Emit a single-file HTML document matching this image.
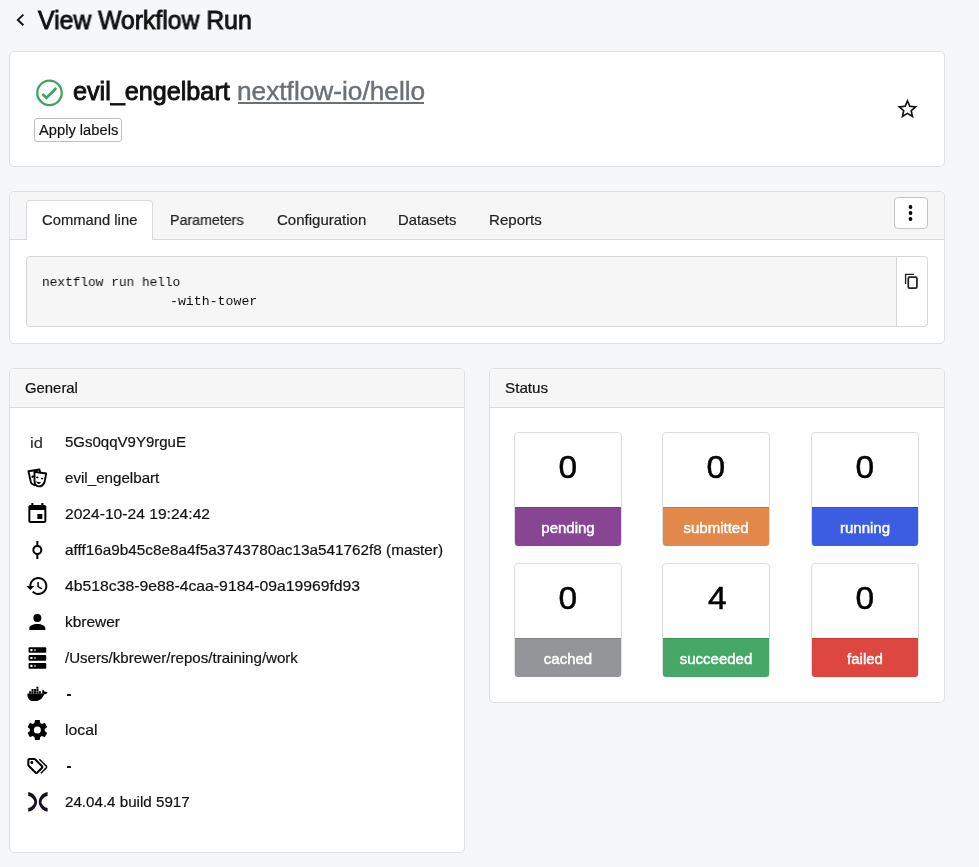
<!DOCTYPE html>
<html><head><meta charset="utf-8">
<style>
*{box-sizing:border-box;margin:0;padding:0}
html,body{width:979px;height:867px;overflow:hidden}
body{background:#f6f7f9;font-family:"Liberation Sans",sans-serif;color:#000;position:relative}
.a{position:absolute}
.t{position:absolute;white-space:nowrap;line-height:1;transform-origin:0 0;will-change:transform}
.card{position:absolute;background:#fff;border:1px solid #dfdfdf;border-radius:5px}
.hdr{position:absolute;left:0;top:0;right:0;background:#f6f6f6;border-bottom:1px solid #d9d9d9;border-radius:4px 4px 0 0}
.tab{font-size:14.5px;color:#222;-webkit-text-stroke:0.2px #222}
.row{font-size:15px;color:#111;-webkit-text-stroke:0.2px #111}
.ic{position:absolute;left:25px;transform:translateX(0.35px);width:24px;height:24px}
.sc{position:absolute;width:108px;height:114px;border:1px solid #dedede;border-radius:4px;background:#fff}
.sc .n{position:absolute;left:0;right:0;top:18px;text-align:center;font-size:32px;line-height:1;color:#000;-webkit-text-stroke:0.45px #000}
.sc .n span{display:inline-block;transform:scaleX(1.05);will-change:transform}
.sc .b{position:absolute;left:0;right:0;bottom:-1px;height:39px;border-radius:0 0 3px 3px;box-shadow:inset 0 1px 0 rgba(0,0,0,0.12);color:#fff;font-size:15px;line-height:1;text-align:center;-webkit-text-stroke:0.45px #fff}
.sc .b span{position:absolute;left:0;right:0;top:12.5px;will-change:transform}
</style></head><body>

<!-- title -->
<svg class="a" style="left:0;top:0" width="40" height="40" viewBox="0 0 40 40"><path d="M23.4 14.6 L17.9 19.9 L23.4 25.2" fill="none" stroke="#111" stroke-width="2"/></svg>
<div class="t" style="left:38px;top:8px;font-size:25px;color:#111;-webkit-text-stroke:0.9px #111;transform:scaleX(0.99)">View Workflow Run</div>

<!-- card 1 -->
<div class="card" style="left:9px;top:51px;width:936px;height:116px"></div>
<svg class="a" style="left:36px;top:79px" width="28" height="28" viewBox="0 0 28 28"><circle cx="13.5" cy="13.9" r="12.2" fill="none" stroke="#3fa35f" stroke-width="2.3"/><path d="M6.4 14.9 L10.4 18.9 L20.3 9.1" fill="none" stroke="#3fa35f" stroke-width="2.8" stroke-linecap="butt"/></svg>
<div class="t" style="left:73px;top:79px;font-size:25px;color:#111;-webkit-text-stroke:0.9px #111;transform:scaleX(1.007)">evil_engelbart</div>
<div class="t" style="left:237px;top:79px;font-size:25px;color:#6b6f76;-webkit-text-stroke:0.4px #6b6f76;transform:scaleX(1.05)">nextflow-io/hello</div>
<div class="a" style="left:238px;top:102px;width:186px;height:2px;background:#6b6f76"></div>
<div class="a" style="left:34px;top:118px;width:88px;height:24px;border:1px solid #bcbfc3;border-radius:3px;background:#fff"></div>
<div class="t" style="left:39px;top:123px;font-size:14px;color:#111;-webkit-text-stroke:0.15px #111;transform:scaleX(1.05)">Apply labels</div>
<svg class="a" style="left:895px;top:97px;transform:translate(0.25px,-0.2px)" width="24.4" height="24.4" viewBox="0 0 24 24"><path d="M22 9.24l-7.19-.62L12 2 9.19 8.63 2 9.24l5.46 4.73L5.82 21 12 17.27 18.18 21l-1.63-7.03L22 9.24zM12 15.4l-3.76 2.27 1-4.28-3.32-2.88 4.38-.38L12 6.1l1.71 4.04 4.38.38-3.32 2.88 1 4.28L12 15.4z" fill="#111"/></svg>

<!-- card 2 -->
<div class="card" style="left:9px;top:191px;width:936px;height:153px;overflow:hidden">
  <div class="hdr" style="height:48px"></div>
  <div class="a" style="left:16px;top:8px;width:127px;height:40px;background:#fff;border:1px solid #d5dbe1;border-bottom:none;border-radius:4px 4px 0 0"></div>
  <div class="a" style="left:884px;top:5px;width:34px;height:32px;background:#fff;border:1px solid #c2c4c6;border-radius:4px"></div>
  <div class="a" style="left:16px;top:64px;width:902px;height:71px;background:#f6f6f6;border:1px solid #d6d6d6;border-radius:4px">
    <div class="a" style="right:-1px;top:-1px;width:32px;height:71px;background:#fff;border:1px solid #d6d6d6;border-radius:0 4px 4px 0"></div>
  </div>
</div>
<div class="t tab" style="left:42px;top:213px;transform:scaleX(1.02)">Command line</div>
<div class="t tab" style="left:170px;top:213px;transform:scaleX(0.98)">Parameters</div>
<div class="t tab" style="left:277px;top:213px;transform:scaleX(1.035)">Configuration</div>
<div class="t tab" style="left:398px;top:213px;transform:scaleX(1.02)">Datasets</div>
<div class="t tab" style="left:489px;top:213px;transform:scaleX(1.04)">Reports</div>
<svg class="a" style="left:898px;top:201px" width="24" height="24" viewBox="0 0 24 24"><circle cx="12.5" cy="6" r="1.9" fill="#000"/><circle cx="12.5" cy="12" r="1.9" fill="#000"/><circle cx="12.5" cy="18" r="1.9" fill="#000"/></svg>
<div class="t" style="left:42px;top:273px;font-family:'Liberation Mono',monospace;font-size:13px;line-height:19px;color:#111;white-space:pre;transform:scaleX(0.985)">nextflow run hello</div>
<div class="t" style="left:169.5px;top:292px;font-family:'Liberation Mono',monospace;font-size:13px;line-height:19px;color:#111;white-space:pre;transform:scaleX(1.017)">-with-tower</div>
<svg class="a" style="left:902px;top:271px" width="20" height="20" viewBox="0 0 20 20"><path d="M3.6 13.1 V3.4 H12" fill="none" stroke="#222" stroke-width="1.4"/><rect x="6.3" y="6.2" width="8.6" height="10.8" rx="1.3" fill="none" stroke="#222" stroke-width="1.75"/></svg>

<!-- General -->
<div class="card" style="left:9px;top:368px;width:456px;height:485px">
  <div class="hdr" style="height:39px"></div>
</div>
<div class="t" style="left:25px;top:381px;font-size:14.5px;color:#111;-webkit-text-stroke:0.2px #111;transform:scaleX(1.026)">General</div>

<div class="t" style="left:29.6px;top:435px;font-size:15px;color:#333;-webkit-text-stroke:0.2px #333;transform:scaleX(1.1)">id</div>
<div class="t row" style="left:65px;top:434px;transform:scaleX(1.0)">5Gs0qqV9Y9rguE</div>

<svg class="ic" style="top:466px" viewBox="0 0 24 24"><g fill="none" stroke="#000" stroke-width="1.9" stroke-linejoin="round" stroke-linecap="round"><path d="M14.8 6.6 L14.1 3.5 L3.1 5.3 L5.6 16.6 C6.2 17.8 7.5 18.6 9.3 19.2"/><path d="M9.1 5.8 L20.8 7.5 L19.3 15.6 C18.5 18.2 16.2 20.4 13.4 20.4 C11.3 20.4 9.3 18.6 9.2 15.4 Z"/><path d="M6.9 11 L7.8 10.3"/></g><ellipse cx="11.9" cy="11.3" rx="1.2" ry="0.85" fill="#000"/><ellipse cx="16.7" cy="12.5" rx="1.2" ry="0.85" fill="#000"/><path d="M10.8 15.3 C12.4 16 14 16.3 15.6 16.3 C15.2 17.5 14.2 18 13.1 17.9 C11.9 17.7 11.1 16.8 10.8 15.3 Z" fill="#000"/></svg>
<div class="t row" style="left:65px;top:470px;transform:scaleX(1.01)">evil_engelbart</div>

<svg class="ic" style="top:502px" viewBox="0 0 24 24"><path d="M17 12h-5v5h5v-5zM16 1v2H8V1H6v2H5c-1.11 0-1.99.9-1.99 2L3 19c0 1.1.89 2 2 2h14c1.1 0 2-.9 2-2V5c0-1.1-.9-2-2-2h-1V1h-2zm3 18H5V8h14v11z" fill="#000"/></svg>
<div class="t row" style="left:65px;top:506px;transform:scaleX(1.041)">2024-10-24 19:24:42</div>

<svg class="ic" style="top:538px" viewBox="0 0 24 24"><path d="M17,12C17,14.42 15.28,16.44 13,16.9V21H11V16.9C8.72,16.44 7,14.42 7,12C7,9.58 8.72,7.56 11,7.1V3H13V7.1C15.28,7.56 17,9.58 17,12M12,9A3,3 0 0,0 9,12A3,3 0 0,0 12,15A3,3 0 0,0 15,12A3,3 0 0,0 12,9Z" fill="#000"/></svg>
<div class="t row" style="left:65px;top:542px;transform:scaleX(1.02)">afff16a9b45c8e8a4f5a3743780ac13a541762f8 (master)</div>

<svg class="ic" style="top:574px" viewBox="0 0 24 24"><path d="M13 3c-4.97 0-9 4.03-9 9H1l3.89 3.89.07.14L9 12H6c0-3.87 3.13-7 7-7s7 3.13 7 7-3.13 7-7 7c-1.93 0-3.68-.79-4.94-2.06l-1.42 1.42C8.27 19.99 10.51 21 13 21c4.97 0 9-4.03 9-9s-4.03-9-9-9zm-1 5v5l4.28 2.54.72-1.21-3.5-2.08V8H12z" fill="#000"/></svg>
<div class="t row" style="left:65px;top:578px;transform:scaleX(1.05)">4b518c38-9e88-4caa-9184-09a19969fd93</div>

<svg class="ic" style="top:610px" viewBox="0 0 24 24"><path d="M12,4A4,4 0 0,1 16,8A4,4 0 0,1 12,12A4,4 0 0,1 8,8A4,4 0 0,1 12,4M12,14C16.42,14 20,15.79 20,18V20H4V18C4,15.79 7.58,14 12,14Z" fill="#000"/></svg>
<div class="t row" style="left:65px;top:614px;transform:scaleX(1.03)">kbrewer</div>

<svg class="ic" style="top:646px" viewBox="0 0 24 24"><g fill="#000"><rect x="3.2" y="1.2" width="17.7" height="5.6" rx="1"/><rect x="3.2" y="9.1" width="17.7" height="5.7" rx="1"/><rect x="3.2" y="17" width="17.7" height="5.8" rx="1"/></g><g fill="#fff"><rect x="5" y="3" width="2.2" height="2.2" rx="0.6"/><rect x="5" y="10.9" width="2.2" height="2.2" rx="0.6"/><rect x="5" y="18.8" width="2.2" height="2.2" rx="0.6"/></g><g fill="#8a8a8a"><rect x="8.7" y="3" width="1.8" height="2.2"/><rect x="8.7" y="10.9" width="1.8" height="2.2"/><rect x="8.7" y="18.8" width="1.8" height="2.2"/></g></svg>
<div class="t row" style="left:65px;top:650px;transform:scaleX(1.005)">/Users/kbrewer/repos/training/work</div>

<svg class="ic" style="top:682px" viewBox="0 0 24 24"><path d="M21.81 10.25C21.75 10.21 21.25 9.82 20.17 9.82C19.89 9.82 19.61 9.85 19.33 9.9C19.12 8.46 17.93 7.76 17.88 7.73L17.59 7.56L17.4 7.83C17.16 8.2 17 8.6 16.88 9.03C16.68 9.84 16.8 10.6 17.21 11.26C16.72 11.54 15.93 11.6 15.77 11.61H2.62C2.28 11.61 2 11.89 2 12.23C2 13.37 2.19 14.5 2.58 15.58C3.03 16.76 3.69 17.63 4.56 18.17C5.53 18.77 7.13 19.11 8.95 19.11C9.77 19.11 10.58 19.04 11.38 18.89C12.5 18.69 13.57 18.3 14.56 17.73C15.38 17.25 16.11 16.64 16.74 15.93C17.79 14.74 18.42 13.41 18.89 12.24H19.08C20.23 12.24 20.94 11.78 21.33 11.39C21.59 11.15 21.78 10.86 21.92 10.53L22 10.28L21.81 10.25M3.85 11.24H5.61C5.69 11.24 5.77 11.17 5.77 11.08V9.5C5.77 9.42 5.7 9.34 5.61 9.34H3.85C3.76 9.34 3.69 9.41 3.69 9.5V11.08C3.7 11.17 3.76 11.24 3.85 11.24M6.28 11.24H8.04C8.12 11.24 8.2 11.17 8.2 11.08V9.5C8.2 9.42 8.13 9.34 8.04 9.34H6.28C6.19 9.34 6.12 9.41 6.12 9.5V11.08C6.13 11.17 6.19 11.24 6.28 11.24M8.75 11.24H10.5C10.6 11.24 10.67 11.17 10.67 11.08V9.5C10.67 9.42 10.61 9.34 10.5 9.34H8.75C8.67 9.34 8.6 9.41 8.6 9.5V11.08C8.6 11.17 8.66 11.24 8.75 11.24M11.19 11.24H12.96C13.04 11.24 13.11 11.17 13.11 11.08V9.5C13.11 9.42 13.05 9.34 12.96 9.34H11.19C11.11 9.34 11.04 9.41 11.04 9.5V11.08C11.04 11.17 11.11 11.24 11.19 11.24M6.28 9H8.04C8.12 9 8.2 8.91 8.2 8.82V7.25C8.2 7.16 8.13 7.09 8.04 7.09H6.28C6.19 7.09 6.12 7.15 6.12 7.25V8.82C6.13 8.91 6.19 9 6.28 9M8.75 9H10.5C10.6 9 10.67 8.91 10.67 8.82V7.25C10.67 7.16 10.61 7.09 10.5 7.09H8.75C8.67 7.09 8.6 7.15 8.6 7.25V8.82C8.6 8.91 8.66 9 8.75 9M11.19 9H12.96C13.04 9 13.11 8.91 13.11 8.82V7.25C13.11 7.16 13.04 7.09 12.96 7.09H11.19C11.11 7.09 11.04 7.15 11.04 7.25V8.82C11.04 8.91 11.11 9 11.19 9M11.19 6.75H12.96C13.04 6.75 13.11 6.68 13.11 6.59V5C13.11 4.93 13.04 4.85 12.96 4.85H11.19C11.11 4.85 11.04 4.92 11.04 5V6.59C11.04 6.67 11.11 6.75 11.19 6.75M13.65 11.24H15.41C15.5 11.24 15.57 11.17 15.57 11.08V9.5C15.57 9.42 15.5 9.34 15.41 9.34H13.65C13.57 9.34 13.5 9.41 13.5 9.5V11.08C13.5 11.17 13.57 11.24 13.65 11.24Z" fill="#000"/></svg>
<div class="a" style="left:66.5px;top:694px;width:4.8px;height:1.6px;background:#1a1a1a"></div>

<svg class="ic" style="top:718px" viewBox="0 0 24 24"><path d="M12,15.5A3.5,3.5 0 0,1 8.5,12A3.5,3.5 0 0,1 12,8.5A3.5,3.5 0 0,1 15.5,12A3.5,3.5 0 0,1 12,15.5M19.43,12.97C19.47,12.65 19.5,12.33 19.5,12C19.5,11.67 19.47,11.34 19.43,11L21.54,9.37C21.73,9.22 21.78,8.95 21.66,8.73L19.66,5.27C19.54,5.05 19.27,4.96 19.05,5.05L16.56,6.05C16.04,5.66 15.5,5.32 14.87,5.07L14.5,2.42C14.46,2.18 14.25,2 14,2H10C9.75,2 9.54,2.18 9.5,2.42L9.13,5.07C8.5,5.32 7.96,5.66 7.44,6.05L4.95,5.05C4.73,4.96 4.46,5.05 4.34,5.27L2.34,8.73C2.21,8.95 2.27,9.22 2.46,9.37L4.57,11C4.53,11.34 4.5,11.67 4.5,12C4.5,12.33 4.53,12.65 4.57,12.97L2.46,14.63C2.27,14.78 2.21,15.05 2.34,15.27L4.34,18.73C4.46,18.95 4.73,19.03 4.95,18.95L7.44,17.94C7.96,18.34 8.5,18.68 9.13,18.93L9.5,21.58C9.54,21.82 9.75,22 10,22H14C14.25,22 14.46,21.82 14.5,21.58L14.87,18.93C15.5,18.67 16.04,18.34 16.56,17.94L19.05,18.95C19.27,19.03 19.54,18.95 19.66,18.73L21.66,15.27C21.78,15.05 21.73,14.78 21.54,14.63L19.43,12.97Z" fill="#000" fill-rule="evenodd"/></svg>
<div class="t row" style="left:65px;top:722px;transform:scaleX(1.05)">local</div>

<svg class="ic" style="top:754px;left:24.6px" viewBox="0 0 24 24"><path d="M6.5 10C7.3 10 8 9.3 8 8.5S7.3 7 6.5 7 5 7.7 5 8.5 5.7 10 6.5 10M9 6L16 13L11 18L4 11V6H9M9 4H4C2.9 4 2 4.9 2 6V11C2 11.6 2.2 12.1 2.6 12.4L9.6 19.4C9.9 19.8 10.4 20 11 20S12.1 19.8 12.4 19.4L17.4 14.4C17.8 14 18 13.5 18 13C18 12.4 17.8 11.9 17.4 11.6L10.4 4.6C10.1 4.2 9.6 4 9 4M13.5 5.7L14.5 4.7L21.4 11.6C21.8 12 22 12.5 22 13S21.8 14.1 21.4 14.4L16 19.8L15 18.8L20.7 13L13.5 5.7Z" fill="#000"/></svg>
<div class="a" style="left:66.5px;top:766px;width:4.8px;height:1.6px;background:#1a1a1a"></div>

<svg class="ic" style="top:790px" viewBox="0 0 24 24" overflow="visible"><path d="M2.85 2.1 C6.5 2.6 9.5 5 10.9 8.3 C11.5 9.8 11.7 10.8 11.7 11.9 C11.7 13 11.5 14 10.9 15.5 C9.5 18.8 6.5 21.2 2.85 21.7 L2.85 17.9 C5.5 17.4 7.5 15.8 8.4 13.9 C8.8 13.1 8.95 12.5 8.95 11.9 C8.95 11.3 8.8 10.7 8.4 9.9 C7.5 8 5.5 6.4 2.85 5.9 Z M 22.25 2.1 C 18.6 2.6 15.6 5.0 14.2 8.3 C 13.6 9.8 13.4 10.8 13.4 11.9 C 13.4 13.0 13.6 14.0 14.2 15.5 C 15.6 18.8 18.6 21.2 22.25 21.7 L 22.25 17.9 C 19.6 17.4 17.6 15.8 16.7 13.9 C 16.3 13.1 16.15 12.5 16.15 11.9 C 16.15 11.3 16.3 10.7 16.7 9.9 C 17.6 8.0 19.6 6.4 22.25 5.9 Z" fill="#160f26"/><path d="M11.6 11.9 H13.5" stroke="#c8c8c8" stroke-width="0.7"/></svg>
<div class="t row" style="left:65px;top:794px;transform:scaleX(1.01)">24.04.4 build 5917</div>

<!-- Status -->
<div class="card" style="left:489px;top:368px;width:456px;height:335px">
  <div class="hdr" style="height:39px"></div>
</div>
<div class="t" style="left:505px;top:381px;font-size:14.5px;color:#111;-webkit-text-stroke:0.2px #111;transform:scaleX(1.05)">Status</div>

<div class="sc" style="left:514px;top:432px"><div class="n"><span>0</span></div><div class="b" style="background:#874594"><span>pending</span></div></div>
<div class="sc" style="left:662px;top:432px"><div class="n"><span>0</span></div><div class="b" style="background:#e1884a"><span>submitted</span></div></div>
<div class="sc" style="left:811px;top:432px"><div class="n"><span>0</span></div><div class="b" style="background:#3c5ce1"><span>running</span></div></div>
<div class="sc" style="left:514px;top:563px"><div class="n"><span>0</span></div><div class="b" style="background:#949598"><span>cached</span></div></div>
<div class="sc" style="left:662px;top:563px"><div class="n"><span style="transform:translateX(1.5px) scaleX(1.05)">4</span></div><div class="b" style="background:#45a866"><span>succeeded</span></div></div>
<div class="sc" style="left:811px;top:563px"><div class="n"><span>0</span></div><div class="b" style="background:#de4740"><span>failed</span></div></div>

</body></html>
